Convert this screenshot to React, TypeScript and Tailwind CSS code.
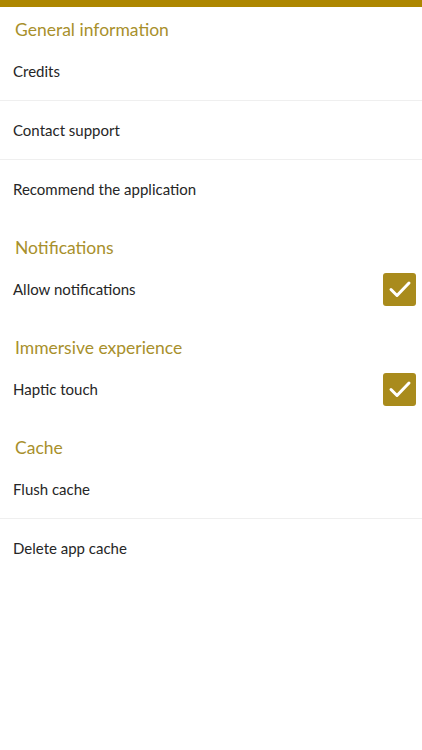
import React from "react";

const Heading = ({ children, first }: { children: React.ReactNode; first?: boolean }) => (
  <h2
    className={`px-[15px] pb-[1px] text-[17.5px] leading-[22px] text-[#a8902c] ${
      first ? "pt-[12px]" : "pt-[19px]"
    }`}
  >
    {children}
  </h2>
);

const Check = () => (
  <div className="flex h-[33px] w-[33px] items-center justify-center rounded-[3px] bg-[#a98b1c]">
    <svg width="24" height="24" viewBox="0 0 24 24" fill="none">
      <path d="M3 12.5l6 6L21 6" stroke="#fff" strokeWidth="3" strokeLinecap="round" strokeLinejoin="round" />
    </svg>
  </div>
);

const Row = ({
  label,
  divider,
  checked,
}: {
  label: string;
  divider?: boolean;
  checked?: boolean;
}) => (
  <div
    className={`flex h-[58px] items-center justify-between pl-[13px] pr-[6px] ${
      divider ? "box-content border-b border-[#efefef]" : ""
    }`}
  >
    <span className="text-[15px] text-[#262626]">{label}</span>
    {checked && <Check />}
  </div>
);

export default function App() {
  return (
    <div className="min-h-[750px] w-[422px] bg-white" style={{ fontFamily: "Lato, 'Open Sans', sans-serif" }}>
      <div className="h-[7px] bg-[#ad8600]" />
      <Heading first>General information</Heading>
      <Row label="Credits" divider />
      <Row label="Contact support" divider />
      <Row label="Recommend the application" />
      <Heading>Notifications</Heading>
      <Row label="Allow notifications" checked />
      <Heading>Immersive experience</Heading>
      <Row label="Haptic touch" checked />
      <Heading>Cache</Heading>
      <Row label="Flush cache" divider />
      <Row label="Delete app cache" />
    </div>
  );
}
